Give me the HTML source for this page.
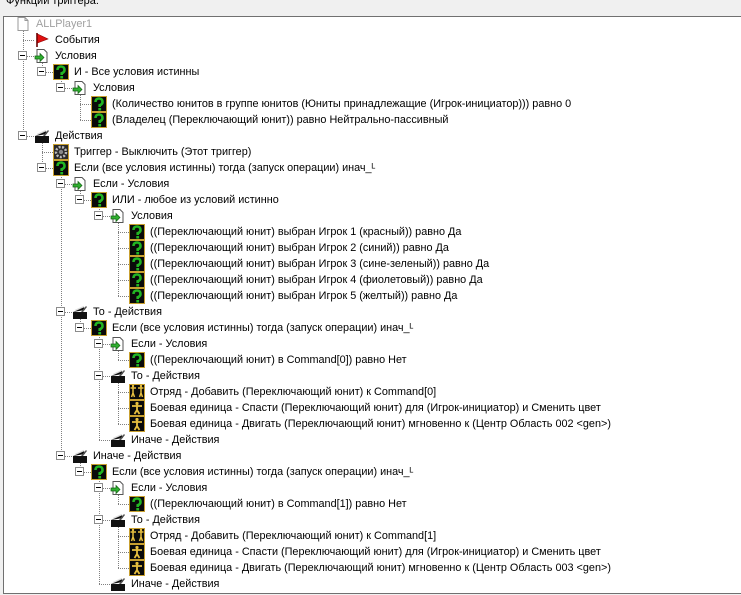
<!DOCTYPE html>
<html><head><meta charset="utf-8">
<style>
body{margin:0;width:741px;height:595px;background:#f0f0f0;position:relative;overflow:hidden;font-family:"Liberation Sans","DejaVu Sans",sans-serif;font-size:10.85px}
#hdr{position:absolute;left:6px;top:-5px;color:#000;font-size:11px}
#box{position:absolute;left:3px;top:16px;width:740px;height:578px;background:#fff;border-top:1px solid #707070;border-left:1px solid #707070;border-bottom:1px solid #707070;box-sizing:border-box}
.v{position:absolute;width:0;border-left:1px dotted #808080}
.h{position:absolute;height:0;border-top:1px dotted #808080}
.t{position:absolute;width:7px;height:7px;border:1px solid #8c8c8c;background:#fff}
.t:after{content:"";position:absolute;left:1px;top:3px;width:5px;height:1px;background:#000}
.i{position:absolute;width:16px;height:16px}
.x{position:absolute;white-space:nowrap;line-height:16px;color:#000}
</style></head><body>
<div id="hdr">Функции триггера:</div>
<div id="box"></div>
<svg width="0" height="0" style="position:absolute">
<defs>
<symbol id="q" viewBox="0 0 16 16"><rect x="0.5" y="0.5" width="15" height="15" fill="#0a0a0a" stroke="#c8a030"/><path d="M4.5 6 Q4.5 2.5 8 2.5 Q11.5 2.5 11.5 6 Q11.5 8.3 8.7 9.2 L8.7 11" fill="none" stroke="#22b522" stroke-width="2.6"/><rect x="7.3" y="12" width="2.8" height="2.5" fill="#22b522"/></symbol>
<symbol id="c" viewBox="0 0 16 16"><path d="M3 1.5 H10 L13 4.5 V14.5 H3 Z" fill="#fff" stroke="#555"/><path d="M1 8 H6 V5.5 L10 9.5 L6 13.5 V11 H1 Z" fill="#30b030" stroke="#106010" stroke-width="0.7"/></symbol>
<symbol id="a" viewBox="0 0 16 16"><rect x="1" y="8" width="14" height="7" fill="#111"/><path d="M1 8 L12 3 L13 6 Z" fill="#111"/><path d="M3 6.5 L12 2.5" stroke="#ddd" stroke-width="1.3"/><path d="M9 8 L14 2 L15 3 L11 8Z" fill="#555"/></symbol>
<symbol id="g" viewBox="0 0 16 16"><rect x="0.5" y="0.5" width="15" height="15" fill="#2a2a2a" stroke="#c8a030"/><circle cx="8" cy="8" r="5" fill="none" stroke="#bbb" stroke-width="2.5" stroke-dasharray="2 1.5"/><circle cx="8" cy="8" r="2.2" fill="#888"/></symbol>
<symbol id="u" viewBox="0 0 16 16"><rect x="0.5" y="0.5" width="15" height="15" fill="#0a0a0a" stroke="#c8a030"/><circle cx="8" cy="3.5" r="1.6" fill="#e8c040"/><path d="M3 6 H13 M8 5 V10 M8 10 L5.5 14 M8 10 L10.5 14" stroke="#e8c040" stroke-width="1.8" fill="none"/></symbol>
<symbol id="w" viewBox="0 0 16 16"><rect x="0.5" y="0.5" width="15" height="15" fill="#0a0a0a" stroke="#c8a030"/><path d="M1.5 4 H7 M4 3 V9 M4 9 L2.5 13 M4 9 L5.5 13 M9 4 H14.5 M12 3 V9 M12 9 L10.5 13 M12 9 L13.5 13" stroke="#e8c040" stroke-width="1.5" fill="none"/><circle cx="4" cy="2" r="1.2" fill="#e8c040"/><circle cx="12" cy="2" r="1.2" fill="#e8c040"/></symbol>
<symbol id="f" viewBox="0 0 16 16"><path d="M3 1 V15" stroke="#600" stroke-width="1.6"/><path d="M3.5 2 L14 7 L3.5 11 Z" fill="#e01010" stroke="#800" stroke-width="0.6"/></symbol>
<symbol id="d" viewBox="0 0 16 16"><path d="M3 1.5 H10 L13 4.5 V14.5 H3 Z M10 1.5 V4.5 H13" fill="#fff" stroke="#999"/></symbol>
</defs></svg>

<div class="v" style="left:23px;top:30px;height:106px"></div>
<div class="v" style="left:42px;top:56px;height:16px"></div>
<div class="v" style="left:61px;top:72px;height:16px"></div>
<div class="v" style="left:80px;top:88px;height:32px"></div>
<div class="v" style="left:42px;top:136px;height:32px"></div>
<div class="v" style="left:61px;top:168px;height:288px"></div>
<div class="v" style="left:80px;top:184px;height:16px"></div>
<div class="v" style="left:99px;top:200px;height:16px"></div>
<div class="v" style="left:118px;top:216px;height:80px"></div>
<div class="v" style="left:80px;top:312px;height:16px"></div>
<div class="v" style="left:99px;top:328px;height:112px"></div>
<div class="v" style="left:118px;top:344px;height:16px"></div>
<div class="v" style="left:118px;top:376px;height:48px"></div>
<div class="v" style="left:80px;top:456px;height:16px"></div>
<div class="v" style="left:99px;top:472px;height:112px"></div>
<div class="v" style="left:118px;top:488px;height:16px"></div>
<div class="v" style="left:118px;top:520px;height:48px"></div>

<svg class="i" style="left:15px;top:16px"><use href="#d"/></svg><div class="x" style="left:36px;top:16px;color:#a0a0a0">ALLPlayer1</div>

<div class="h" style="left:23px;top:40px;width:11px"></div><svg class="i" style="left:34px;top:32px"><use href="#f"/></svg><div class="x" style="left:55px;top:32px">События</div>

<div class="h" style="left:23px;top:56px;width:11px"></div><div class="t" style="left:18px;top:51px"></div><svg class="i" style="left:34px;top:48px"><use href="#c"/></svg><div class="x" style="left:55px;top:48px">Условия</div>

<div class="h" style="left:42px;top:72px;width:11px"></div><div class="t" style="left:37px;top:67px"></div><svg class="i" style="left:53px;top:64px"><use href="#q"/></svg><div class="x" style="left:74px;top:64px">И - Все условия истинны</div>

<div class="h" style="left:61px;top:88px;width:11px"></div><div class="t" style="left:56px;top:83px"></div><svg class="i" style="left:72px;top:80px"><use href="#c"/></svg><div class="x" style="left:93px;top:80px">Условия</div>

<div class="h" style="left:80px;top:104px;width:11px"></div><svg class="i" style="left:91px;top:96px"><use href="#q"/></svg><div class="x" style="left:112px;top:96px">(Количество юнитов в группе юнитов (Юниты принадлежащие (Игрок-инициатор))) равно 0</div>

<div class="h" style="left:80px;top:120px;width:11px"></div><svg class="i" style="left:91px;top:112px"><use href="#q"/></svg><div class="x" style="left:112px;top:112px">(Владелец (Переключающий юнит)) равно Нейтрально-пассивный</div>

<div class="h" style="left:23px;top:136px;width:11px"></div><div class="t" style="left:18px;top:131px"></div><svg class="i" style="left:34px;top:128px"><use href="#a"/></svg><div class="x" style="left:55px;top:128px">Действия</div>

<div class="h" style="left:42px;top:152px;width:11px"></div><svg class="i" style="left:53px;top:144px"><use href="#g"/></svg><div class="x" style="left:74px;top:144px">Триггер - Выключить (Этот триггер)</div>

<div class="h" style="left:42px;top:168px;width:11px"></div><div class="t" style="left:37px;top:163px"></div><svg class="i" style="left:53px;top:160px"><use href="#q"/></svg><div class="x" style="left:74px;top:160px">Если (все условия истинны) тогда (запуск операции) инач_ᴸ</div>

<div class="h" style="left:61px;top:184px;width:11px"></div><div class="t" style="left:56px;top:179px"></div><svg class="i" style="left:72px;top:176px"><use href="#c"/></svg><div class="x" style="left:93px;top:176px">Если - Условия</div>

<div class="h" style="left:80px;top:200px;width:11px"></div><div class="t" style="left:75px;top:195px"></div><svg class="i" style="left:91px;top:192px"><use href="#q"/></svg><div class="x" style="left:112px;top:192px">ИЛИ - любое из условий истинно</div>

<div class="h" style="left:99px;top:216px;width:11px"></div><div class="t" style="left:94px;top:211px"></div><svg class="i" style="left:110px;top:208px"><use href="#c"/></svg><div class="x" style="left:131px;top:208px">Условия</div>

<div class="h" style="left:118px;top:232px;width:11px"></div><svg class="i" style="left:129px;top:224px"><use href="#q"/></svg><div class="x" style="left:150px;top:224px">((Переключающий юнит) выбран Игрок 1 (красный)) равно Да</div>
<div class="h" style="left:118px;top:248px;width:11px"></div><svg class="i" style="left:129px;top:240px"><use href="#q"/></svg><div class="x" style="left:150px;top:240px">((Переключающий юнит) выбран Игрок 2 (синий)) равно Да</div>
<div class="h" style="left:118px;top:264px;width:11px"></div><svg class="i" style="left:129px;top:256px"><use href="#q"/></svg><div class="x" style="left:150px;top:256px">((Переключающий юнит) выбран Игрок 3 (сине-зеленый)) равно Да</div>
<div class="h" style="left:118px;top:280px;width:11px"></div><svg class="i" style="left:129px;top:272px"><use href="#q"/></svg><div class="x" style="left:150px;top:272px">((Переключающий юнит) выбран Игрок 4 (фиолетовый)) равно Да</div>
<div class="h" style="left:118px;top:296px;width:11px"></div><svg class="i" style="left:129px;top:288px"><use href="#q"/></svg><div class="x" style="left:150px;top:288px">((Переключающий юнит) выбран Игрок 5 (желтый)) равно Да</div>

<div class="h" style="left:61px;top:312px;width:11px"></div><div class="t" style="left:56px;top:307px"></div><svg class="i" style="left:72px;top:304px"><use href="#a"/></svg><div class="x" style="left:93px;top:304px">То - Действия</div>

<div class="h" style="left:80px;top:328px;width:11px"></div><div class="t" style="left:75px;top:323px"></div><svg class="i" style="left:91px;top:320px"><use href="#q"/></svg><div class="x" style="left:112px;top:320px">Если (все условия истинны) тогда (запуск операции) инач_ᴸ</div>

<div class="h" style="left:99px;top:344px;width:11px"></div><div class="t" style="left:94px;top:339px"></div><svg class="i" style="left:110px;top:336px"><use href="#c"/></svg><div class="x" style="left:131px;top:336px">Если - Условия</div>
<div class="h" style="left:118px;top:360px;width:11px"></div><svg class="i" style="left:129px;top:352px"><use href="#q"/></svg><div class="x" style="left:150px;top:352px">((Переключающий юнит) в Command[0]) равно Нет</div>

<div class="h" style="left:99px;top:376px;width:11px"></div><div class="t" style="left:94px;top:371px"></div><svg class="i" style="left:110px;top:368px"><use href="#a"/></svg><div class="x" style="left:131px;top:368px">То - Действия</div>
<div class="h" style="left:118px;top:392px;width:11px"></div><svg class="i" style="left:129px;top:384px"><use href="#w"/></svg><div class="x" style="left:150px;top:384px">Отряд - Добавить (Переключающий юнит) к Command[0]</div>
<div class="h" style="left:118px;top:408px;width:11px"></div><svg class="i" style="left:129px;top:400px"><use href="#u"/></svg><div class="x" style="left:150px;top:400px">Боевая единица - Спасти (Переключающий юнит) для (Игрок-инициатор) и Сменить цвет</div>
<div class="h" style="left:118px;top:424px;width:11px"></div><svg class="i" style="left:129px;top:416px"><use href="#u"/></svg><div class="x" style="left:150px;top:416px">Боевая единица - Двигать (Переключающий юнит) мгновенно к (Центр Область 002 &lt;gen&gt;)</div>
<div class="h" style="left:99px;top:440px;width:11px"></div><svg class="i" style="left:110px;top:432px"><use href="#a"/></svg><div class="x" style="left:131px;top:432px">Иначе - Действия</div>

<div class="h" style="left:61px;top:456px;width:11px"></div><div class="t" style="left:56px;top:451px"></div><svg class="i" style="left:72px;top:448px"><use href="#a"/></svg><div class="x" style="left:93px;top:448px">Иначе - Действия</div>

<div class="h" style="left:80px;top:472px;width:11px"></div><div class="t" style="left:75px;top:467px"></div><svg class="i" style="left:91px;top:464px"><use href="#q"/></svg><div class="x" style="left:112px;top:464px">Если (все условия истинны) тогда (запуск операции) инач_ᴸ</div>

<div class="h" style="left:99px;top:488px;width:11px"></div><div class="t" style="left:94px;top:483px"></div><svg class="i" style="left:110px;top:480px"><use href="#c"/></svg><div class="x" style="left:131px;top:480px">Если - Условия</div>
<div class="h" style="left:118px;top:504px;width:11px"></div><svg class="i" style="left:129px;top:496px"><use href="#q"/></svg><div class="x" style="left:150px;top:496px">((Переключающий юнит) в Command[1]) равно Нет</div>

<div class="h" style="left:99px;top:520px;width:11px"></div><div class="t" style="left:94px;top:515px"></div><svg class="i" style="left:110px;top:512px"><use href="#a"/></svg><div class="x" style="left:131px;top:512px">То - Действия</div>
<div class="h" style="left:118px;top:536px;width:11px"></div><svg class="i" style="left:129px;top:528px"><use href="#w"/></svg><div class="x" style="left:150px;top:528px">Отряд - Добавить (Переключающий юнит) к Command[1]</div>
<div class="h" style="left:118px;top:552px;width:11px"></div><svg class="i" style="left:129px;top:544px"><use href="#u"/></svg><div class="x" style="left:150px;top:544px">Боевая единица - Спасти (Переключающий юнит) для (Игрок-инициатор) и Сменить цвет</div>
<div class="h" style="left:118px;top:568px;width:11px"></div><svg class="i" style="left:129px;top:560px"><use href="#u"/></svg><div class="x" style="left:150px;top:560px">Боевая единица - Двигать (Переключающий юнит) мгновенно к (Центр Область 003 &lt;gen&gt;)</div>
<div class="h" style="left:99px;top:584px;width:11px"></div><svg class="i" style="left:110px;top:576px"><use href="#a"/></svg><div class="x" style="left:131px;top:576px">Иначе - Действия</div>
</body></html>
